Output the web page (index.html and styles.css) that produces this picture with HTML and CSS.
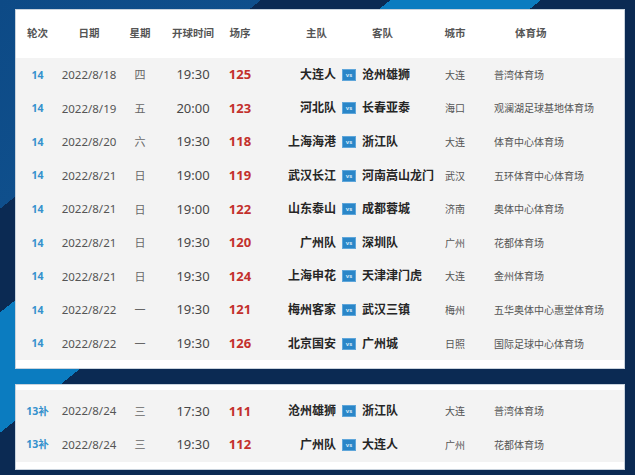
FILE: index.html
```html
<!DOCTYPE html>
<html lang="zh-CN">
<head>
<meta charset="utf-8">
<title>赛程</title>
<link rel="stylesheet" href="styles.css">
</head>
<body>
<div class="page">
  <section class="panel panel-main">
    <div class="row head">
      <div class="c-round">轮次</div>
      <div class="c-date">日期</div>
      <div class="c-week">星期</div>
      <div class="c-time">开球时间</div>
      <div class="c-no">场序</div>
      <div class="c-home">主队</div>
      <div class="c-vs"></div>
      <div class="c-away">客队</div>
      <div class="c-city">城市</div>
      <div class="c-venue">体育场</div>
    </div>
    <div class="rows">
      <div class="row"><div class="c-round">14</div><div class="c-date">2022/8/18</div><div class="c-week">四</div><div class="c-time">19:30</div><div class="c-no">125</div><div class="c-home">大连人</div><div class="c-vs"><span class="vs">vs</span></div><div class="c-away">沧州雄狮</div><div class="c-city">大连</div><div class="c-venue">普湾体育场</div></div>
      <div class="row"><div class="c-round">14</div><div class="c-date">2022/8/19</div><div class="c-week">五</div><div class="c-time">20:00</div><div class="c-no">123</div><div class="c-home">河北队</div><div class="c-vs"><span class="vs">vs</span></div><div class="c-away">长春亚泰</div><div class="c-city">海口</div><div class="c-venue">观澜湖足球基地体育场</div></div>
      <div class="row"><div class="c-round">14</div><div class="c-date">2022/8/20</div><div class="c-week">六</div><div class="c-time">19:30</div><div class="c-no">118</div><div class="c-home">上海海港</div><div class="c-vs"><span class="vs">vs</span></div><div class="c-away">浙江队</div><div class="c-city">大连</div><div class="c-venue">体育中心体育场</div></div>
      <div class="row"><div class="c-round">14</div><div class="c-date">2022/8/21</div><div class="c-week">日</div><div class="c-time">19:00</div><div class="c-no">119</div><div class="c-home">武汉长江</div><div class="c-vs"><span class="vs">vs</span></div><div class="c-away">河南嵩山龙门</div><div class="c-city">武汉</div><div class="c-venue">五环体育中心体育场</div></div>
      <div class="row"><div class="c-round">14</div><div class="c-date">2022/8/21</div><div class="c-week">日</div><div class="c-time">19:00</div><div class="c-no">122</div><div class="c-home">山东泰山</div><div class="c-vs"><span class="vs">vs</span></div><div class="c-away">成都蓉城</div><div class="c-city">济南</div><div class="c-venue">奥体中心体育场</div></div>
      <div class="row"><div class="c-round">14</div><div class="c-date">2022/8/21</div><div class="c-week">日</div><div class="c-time">19:30</div><div class="c-no">120</div><div class="c-home">广州队</div><div class="c-vs"><span class="vs">vs</span></div><div class="c-away">深圳队</div><div class="c-city">广州</div><div class="c-venue">花都体育场</div></div>
      <div class="row"><div class="c-round">14</div><div class="c-date">2022/8/21</div><div class="c-week">日</div><div class="c-time">19:30</div><div class="c-no">124</div><div class="c-home">上海申花</div><div class="c-vs"><span class="vs">vs</span></div><div class="c-away">天津津门虎</div><div class="c-city">大连</div><div class="c-venue">金州体育场</div></div>
      <div class="row"><div class="c-round">14</div><div class="c-date">2022/8/22</div><div class="c-week">一</div><div class="c-time">19:30</div><div class="c-no">121</div><div class="c-home">梅州客家</div><div class="c-vs"><span class="vs">vs</span></div><div class="c-away">武汉三镇</div><div class="c-city">梅州</div><div class="c-venue">五华奥体中心惠堂体育场</div></div>
      <div class="row"><div class="c-round">14</div><div class="c-date">2022/8/22</div><div class="c-week">一</div><div class="c-time">19:30</div><div class="c-no">126</div><div class="c-home">北京国安</div><div class="c-vs"><span class="vs">vs</span></div><div class="c-away">广州城</div><div class="c-city">日照</div><div class="c-venue">国际足球中心体育场</div></div>
    </div>
  </section>
  <section class="panel panel-extra">
    <div class="rows">
      <div class="row"><div class="c-round">13补</div><div class="c-date">2022/8/24</div><div class="c-week">三</div><div class="c-time">17:30</div><div class="c-no">111</div><div class="c-home">沧州雄狮</div><div class="c-vs"><span class="vs">vs</span></div><div class="c-away">浙江队</div><div class="c-city">大连</div><div class="c-venue">普湾体育场</div></div>
      <div class="row"><div class="c-round">13补</div><div class="c-date">2022/8/24</div><div class="c-week">三</div><div class="c-time">19:30</div><div class="c-no">112</div><div class="c-home">广州队</div><div class="c-vs"><span class="vs">vs</span></div><div class="c-away">大连人</div><div class="c-city">广州</div><div class="c-venue">花都体育场</div></div>
    </div>
  </section>
</div>
</body>
</html>
```

FILE: styles.css
```css
html, body {
  margin: 0;
  padding: 0;
}

body {
  font-family: "Noto Sans", "Noto Sans CJK SC", sans-serif;
  background: #0b2a53;
}

.page {
  width: 635px;
  height: 475px;
  box-sizing: border-box;
  padding: 10px 11px 0 16px;
  overflow: hidden;
  background: linear-gradient(141.34deg,
    #0d4a86 0, #0f4f8c 163px,
    #0b2a53 163px, #0b2a53 244px,
    #0b7cc0 244px, #0b7cc0 338px,
    #0b2a53 338px);
}

.panel {
  background: #ffffff;
  box-shadow: 0 0 0 1px #c9d3dd;
}

.panel-main {
  padding-bottom: 8px;
}

.panel-extra {
  margin-top: 17px;
  padding: 5px 0 7px;
}

.panel-extra .rows {
  padding-top: 4px;
}

.rows {
  background: #f3f3f3;
}

.row {
  display: grid;
  grid-template-columns: 43px 60px 42px 64px 30px 81px 26px 74px 38px 150px;
  align-items: center;
  height: 33.6px;
  white-space: nowrap;
}

.row.head {
  height: 48px;
  padding-bottom: 1px;
  box-sizing: border-box;
  font-size: 10.5px;
  color: #555;
  font-weight: 700;
}

.row > div {
  line-height: 1;
}

.c-round, .c-date, .c-week, .c-time, .c-no, .c-city {
  text-align: center;
}

.c-home {
  text-align: right;
}

.c-away, .c-venue {
  text-align: left;
}

.head .c-home {
  padding-right: 9px;
}

.head .c-away {
  padding-left: 10px;
}

.head .c-venue {
  padding-left: 41px;
}

.rows .c-round {
  color: #3591cd;
  font-weight: 700;
  font-size: 10.5px;
}

.rows .c-date {
  color: #555;
  font-size: 11.5px;
}

.rows .c-week {
  color: #666;
  font-size: 11px;
}

.rows .c-time {
  color: #474747;
  font-size: 13px;
}

.rows .c-no {
  color: #c3302c;
  font-weight: 700;
  font-size: 13px;
}

.rows .c-home, .rows .c-away {
  color: #262626;
  font-weight: 700;
  font-size: 12px;
}

.rows .c-city {
  color: #555;
  font-size: 10px;
}

.rows .c-venue {
  color: #555;
  font-size: 10px;
  padding-left: 20px;
}

.c-vs {
  display: flex;
  justify-content: center;
}

.vs {
  display: flex;
  align-items: center;
  justify-content: center;
  width: 12px;
  height: 10px;
  background: #2a86c8;
  border: 1px solid #5fa6da;
  color: #cfe6f7;
  font-size: 6px;
  font-weight: 700;
  line-height: 1;
}
```
